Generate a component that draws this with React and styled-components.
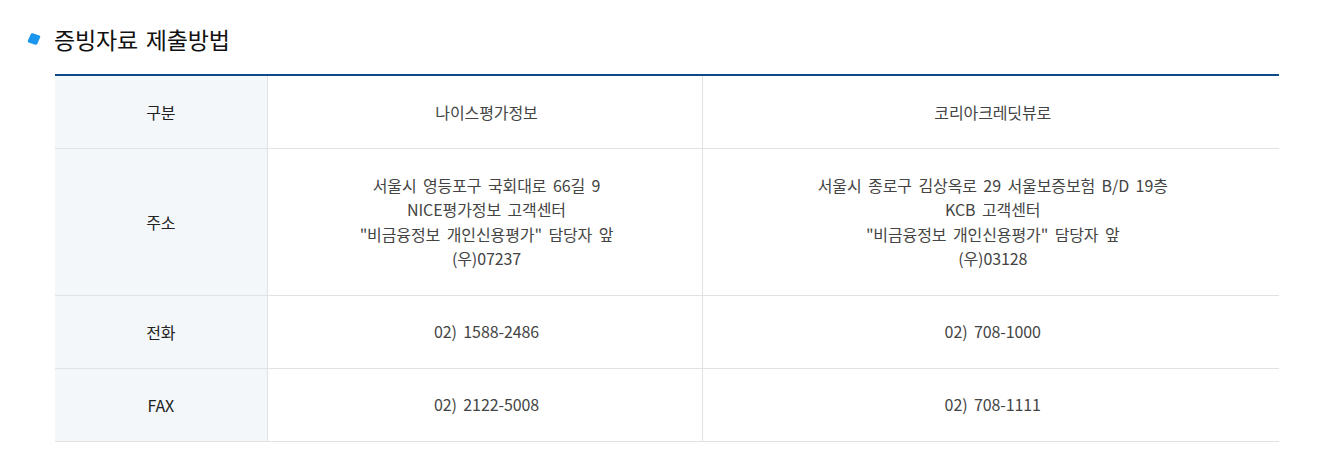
import styled, { createGlobalStyle } from "styled-components";

const GlobalStyle = createGlobalStyle`
  body {
    margin: 0;
    background: #fff;
    font-family: "Noto Sans CJK KR", "Noto Sans", sans-serif;
  }
`;

const Section = styled.section`
  width: 1322px;
  padding: 24px 0 0;
`;

const Title = styled.h2`
  display: flex;
  align-items: center;
  gap: 15px;
  margin: 0 0 20px 29px;
  height: 30px;
  font-size: 23px;
  font-weight: 400;
  color: #111;
  letter-spacing: -0.2px;
  word-spacing: 3px;
`;

const Bullet = styled.span`
  display: block;
  width: 10px;
  height: 10px;
  background: #1a96ef;
  border-radius: 1.5px;
  transform: rotate(18deg) skewX(-6deg);
`;

const Table = styled.table`
  margin-left: 55px;
  width: 1224px;
  border-collapse: collapse;
  table-layout: fixed;
  border-top: 2px solid #0e4a8a;
  font-size: 16px;
`;

const Col = styled.col`
  width: ${(p) => p.$w}px;
`;

const Row = styled.tr`
  height: ${(p) => p.$h}px;
`;

const Head = styled.th`
  box-sizing: border-box;
  padding: 0;
  background: #f3f7fa;
  color: #222;
  font-weight: 400;
  text-align: center;
  vertical-align: middle;
  border-bottom: 1px solid #e2e2e2;
  letter-spacing: -0.2px;
`;

const Cell = styled.td`
  box-sizing: border-box;
  padding: 0 0 0 4px;
  color: #444;
  text-align: center;
  vertical-align: middle;
  border-bottom: 1px solid #e2e2e2;
  border-left: 1px solid #e2e2e2;
  line-height: 24.5px;
  letter-spacing: -0.1px;
  word-spacing: 3px;
`;

const rows = [
  { label: "구분", h: 73, nice: ["나이스평가정보"], kcb: ["코리아크레딧뷰로"] },
  {
    label: "주소",
    h: 147,
    nice: [
      "서울시 영등포구 국회대로 66길 9",
      "NICE평가정보 고객센터",
      "\"비금융정보 개인신용평가\" 담당자 앞",
      "(우)07237",
    ],
    kcb: [
      "서울시 종로구 김상옥로 29 서울보증보험 B/D 19층",
      "KCB 고객센터",
      "\"비금융정보 개인신용평가\" 담당자 앞",
      "(우)03128",
    ],
  },
  { label: "전화", h: 73, nice: ["02) 1588-2486"], kcb: ["02) 708-1000"] },
  { label: "FAX", h: 73, nice: ["02) 2122-5008"], kcb: ["02) 708-1111"] },
];

const Lines = ({ lines }) =>
  lines.map((l, i) => (
    <span key={i}>
      {l}
      {i < lines.length - 1 && <br />}
    </span>
  ));

export default function App() {
  return (
    <>
      <GlobalStyle />
      <Section>
        <Title>
          <Bullet />
          증빙자료 제출방법
        </Title>
        <Table>
          <colgroup>
            <Col $w={212} />
            <Col $w={435} />
            <Col $w={577} />
          </colgroup>
          <tbody>
            {rows.map((r) => (
              <Row key={r.label} $h={r.h}>
                <Head>{r.label}</Head>
                <Cell>
                  <Lines lines={r.nice} />
                </Cell>
                <Cell>
                  <Lines lines={r.kcb} />
                </Cell>
              </Row>
            ))}
          </tbody>
        </Table>
      </Section>
    </>
  );
}
